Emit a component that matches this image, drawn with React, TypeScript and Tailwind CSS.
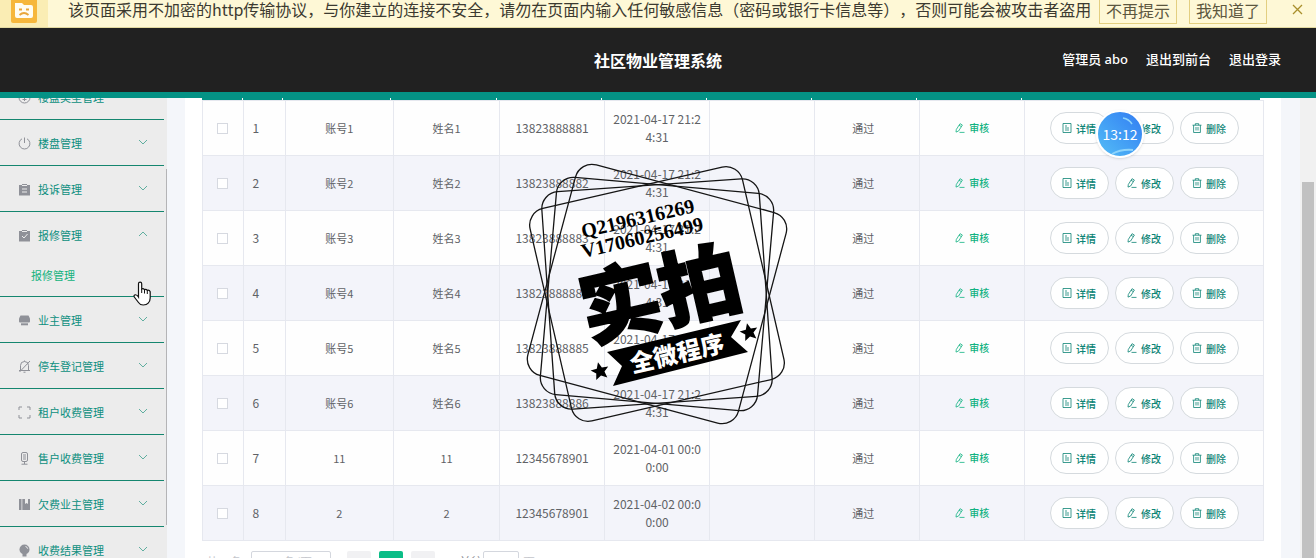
import type { ReactNode } from "react";

const GREY = "#8f9198";

const Chevron = ({ up = false }: { up?: boolean }) => (
  <svg width="10" height="8" viewBox="0 0 10 8" fill="none" stroke="#5fae9f" strokeWidth="1">
    {up ? <path d="M1 6l4-4 4 4" /> : <path d="M1 2l4 4 4-4" />}
  </svg>
);

const Box = ({ children }: { children: ReactNode }) => (
  <svg width="13" height="13" viewBox="0 0 13 13" fill="none" stroke={GREY} strokeWidth="1" className="shrink-0">
    {children}
  </svg>
);

const Coin = () => (
  <Box>
    <circle cx="6.5" cy="6.5" r="5.5" />
    <path d="M4.5 3.5l2 2.5 2-2.5M6.5 6v4M4.5 6.5h4M4.5 8.5h4" />
  </Box>
);
const Power = () => (
  <Box>
    <path d="M4 1.8a5.4 5.4 0 1 0 5 0M6.5 0.5v5.5" />
  </Box>
);
const Order = () => (
  <Box>
    <path d="M1 2h3V1h5v1h3v10.500H1z" fill={GREY} stroke="none" />
    <path d="M4 2.500h5M4 6h5M4 9h5" stroke="#ececec" />
  </Box>
);
const Claim = () => (
  <Box>
    <path d="M1 2h3V1h5v1h3v10.500H1z" fill={GREY} stroke="none" />
    <path d="M4 2.500h5M4 7l2 2 3.500-4" stroke="#ececec" />
  </Box>
);
const Cup = () => (
  <Box>
    <path d="M2.500 1.500h8l1.500 3v3a1 1 0 0 1-1 1H2a1 1 0 0 1-1-1v-3z" fill={GREY} stroke="none" />
    <path d="M3 9.300h7v2H3z" fill={GREY} stroke="none" />
  </Box>
);
const Muted = () => (
  <Box>
    <path d="M1 10.500h11M2.500 10.500V5.500a4 4 0 0 1 8 0v5M5.500 12.200h2M6.500 1.500V.5M12 1L1.500 12" />
  </Box>
);
const Full = () => (
  <Box>
    <path d="M1 4V1h3M9 1h3v3M12 9v3H9M4 12H1V9" />
  </Box>
);
const Mic = () => (
  <Box>
    <rect x="3.500" y=".5" width="6" height="9" rx="1.500" />
    <path d="M5 3h3M5 5h3M5 7h3M6.500 9.500V12M3.500 12.200h6" />
  </Box>
);
const Book = () => (
  <Box>
    <path d="M1 1h2.500v11H1zM4.300 1H7v5l1.500-1L10 6V1h2v11H4.300z" fill={GREY} stroke="none" />
  </Box>
);
const Bulb = () => (
  <Box>
    <circle cx="6.500" cy="5.500" r="5" fill={GREY} stroke="none" />
    <path d="M4.500 10h4v2.500h-4z" fill={GREY} stroke="none" />
    <path d="M7.500 2.500q2 .5 2.200 2.200" stroke="#ececec" />
  </Box>
);

const DocIcon = () => (
  <svg width="10" height="10" viewBox="0 0 10 10" fill="none" stroke="currentColor" strokeWidth=".8">
    <path d="M1 .5h8v9H1zM3 3h2M3 5h4M3 7h4" />
  </svg>
);
const EditIcon = () => (
  <svg width="10" height="10" viewBox="0 0 10 10" fill="none" stroke="currentColor" strokeWidth=".8">
    <path d="M5 .7l2.400 1.300-3.800 6-2.600 1.100.3-2.600zM4 2.300l2.400 1.300M4.500 9.400h5" />
  </svg>
);
const TrashIcon = () => (
  <svg width="10" height="10" viewBox="0 0 10 10" fill="none" stroke="currentColor" strokeWidth=".8">
    <path d="M.5 2.200h9M3.300 2.200V.7h3.400v1.500M1.600 2.200v7.300h6.800V2.200M4 4v3.500M6 4v3.500" />
  </svg>
);

const menu = [
  { label: "楼盘类型管理", icon: <Coin /> },
  { label: "楼盘管理", icon: <Power /> },
  { label: "投诉管理", icon: <Order /> },
  { label: "报修管理", icon: <Claim />, child: "报修管理" },
  { label: "业主管理", icon: <Cup /> },
  { label: "停车登记管理", icon: <Muted /> },
  { label: "租户收费管理", icon: <Full /> },
  { label: "售户收费管理", icon: <Mic /> },
  { label: "欠费业主管理", icon: <Book /> },
  { label: "收费结果管理", icon: <Bulb /> },
];

const rows = [
  ["账号1", "姓名1", "13823888881", "2021-04-17 21:24:31"],
  ["账号2", "姓名2", "13823888882", "2021-04-17 21:24:31"],
  ["账号3", "姓名3", "13823888883", "2021-04-17 21:24:31"],
  ["账号4", "姓名4", "13823888884", "2021-04-17 21:24:31"],
  ["账号5", "姓名5", "13823888885", "2021-04-17 21:24:31"],
  ["账号6", "姓名6", "13823888886", "2021-04-17 21:24:31"],
  ["11", "11", "12345678901", "2021-04-01 00:00:00"],
  ["2", "2", "12345678901", "2021-04-02 00:00:00"],
];

const Pill = ({ icon, children }: { icon: ReactNode; children: ReactNode }) => (
  <button className="flex h-8 w-[59px] items-center justify-center gap-1 rounded-full border border-[#d5dade] bg-white text-[10px] font-medium text-[#0c8475]">
    {icon}
    {children}
  </button>
);

function Banner() {
  return (
    <div className="flex h-7 shrink-0 items-end overflow-hidden border-b border-[#e2d9a0] bg-[#fef8d6] text-base text-[#3c3a30]">
      <div className="flex h-full w-12 shrink-0 justify-center bg-[#faedb4]">
        <svg width="26" height="23" viewBox="0 0 26 23">
          <path d="M0 0h26v21a2 2 0 0 1-2 2H2a2 2 0 0 1-2-2z" fill="#f6b73c" />
          <path d="M4 3h7l2 2h7a2 2 0 0 1 2 2v9a2 2 0 0 1-2 2H6a2 2 0 0 1-2-2z" fill="#fffdf2" />
          <path d="M8 9.500h3M15 9.500h3M8.500 15q4.500-4 9 0" fill="none" stroke="#e9a63a" strokeWidth="1.800" />
        </svg>
      </div>
      <p className="ml-5 h-7 leading-5 whitespace-nowrap [text-spacing-trim:space-all]">
        该页面采用不加密的http传输协议，与你建立的连接不安全，请勿在页面内输入任何敏感信息（密码或银行卡信息等），否则可能会被攻击者盗用
      </p>
      <div className="mb-[3px] ml-auto flex shrink-0 gap-3 text-[#5c573f]">
        <button className="h-8 w-[78px] border border-[#e3cf80] pt-1">不再提示</button>
        <button className="h-8 w-[78px] border border-[#e3cf80] pt-1">我知道了</button>
      </div>
      <button aria-label="关闭" className="mr-[13px] mb-3 ml-[25px] shrink-0">
        <svg width="11" height="11" viewBox="0 0 11 11" stroke="#a98f2c" strokeWidth="1.300">
          <path d="M1 1l9 9M10 1l-9 9" />
        </svg>
      </button>
    </div>
  );
}

function Sidebar() {
  return (
    <aside className="relative w-[167px] shrink-0 overflow-hidden bg-[#ececec]">
      <nav className="-mt-6 w-[164px] text-[11px] text-[#0c8f80]">
        {menu.map((m) => (
          <div key={m.label} className="border-b border-[#15866f]">
            <a href="#" className="flex h-[45px] items-center pt-0.5 pl-[18px]">
              {m.icon}
              <span className="ml-[7px]">{m.label}</span>
              <span className="mr-4 mb-1 ml-auto">
                <Chevron up={!!m.child} />
              </span>
            </a>
            {m.child && (
              <a href="#" className="block h-[39px] pl-[31px] leading-9 text-[#12b27c]">
                {m.child}
              </a>
            )}
          </div>
        ))}
      </nav>
      <div className="absolute top-[71px] right-0 h-[356px] w-px bg-[#b4b4b6]" />
    </aside>
  );
}

function Stamp() {
  const star = "M0-9L2.600-3 9-2.600 4.200 1.600 5.700 8 0 4.600-5.700 8-4.200 1.600-9-2.600-2.600-3z";
  return (
    <svg
      width="270"
      height="270"
      viewBox="-135 -135 270 270"
      className="pointer-events-none absolute top-[61px] left-1/2 ml-[-211px]"
    >
      <g fill="none" stroke="#151515" strokeWidth="1.300">
        {[15, 5, -4, -13].map((a) => (
          <rect key={a} x="-109" y="-109" width="218" height="218" rx="17" transform={`rotate(${a})`} />
        ))}
      </g>
      <g fontFamily="'Liberation Serif', serif" fontWeight="700" fontSize="20">
        <text transform="translate(-74 -56) rotate(-13)">Q2196316269</text>
        <text transform="translate(-74 -36) rotate(-13)">V17060256499</text>
      </g>
      <g fontFamily="'Noto Sans CJK SC', sans-serif" fontWeight="900" textAnchor="middle">
        <text transform="translate(10 29) rotate(-13)" fontSize="81" stroke="#000" strokeWidth="2">
          实拍
        </text>
        <path d="M-50 58L84 26 74 43 91 58-44 92-35 72z" />
        <text transform="translate(22 68) rotate(-13)" fontSize="24" fill="#fff">
          全微程序
        </text>
      </g>
      <path d={star} transform="translate(-57 77) rotate(-13)" />
      <path d={star} transform="translate(92 38) rotate(-13)" />
    </svg>
  );
}

const cell = "border border-[#e6e8ef] p-0 text-center";

export default function App() {
  return (
    <div
      className="relative flex h-screen flex-col overflow-hidden bg-white"
      style={{ fontFamily: "'Noto Sans CJK SC', 'Noto Sans', sans-serif" }}
    >
      <Banner />
      <header className="grid h-[70px] shrink-0 grid-cols-[1fr_auto_1fr] items-center border-b-6 border-[#049285] bg-[#212121] text-[13px] text-white">
        <span />
        <h1 className="text-base font-bold">社区物业管理系统</h1>
        <div className="mr-[35px] flex justify-end gap-[18px] font-['Noto_Sans','Noto_Sans_CJK_SC',sans-serif] font-medium">
          <span>管理员 abo</span>
          <a href="#">退出到前台</a>
          <a href="#">退出登录</a>
        </div>
      </header>

      <div className="flex min-h-0 flex-1">
        <Sidebar />
        <div className="min-w-0 flex-1 overflow-hidden bg-[#f4f6fa] pr-[19px] pl-[18px]">
          <main className="relative h-full bg-white px-[17px] text-[#606266]">
            <div className="mr-1 grid h-0.5 grid-cols-[40fr_40fr_108fr_105fr_105fr_105fr_105fr_105fr_105fr_240fr] gap-px">
              {Array.from({ length: 10 }, (_, i) => (
                <div key={i} className="bg-[#049285]" />
              ))}
            </div>
            <table className="w-full table-fixed border-collapse text-[11px]">
              <colgroup>
                <col className="w-[3.900%]" />
                <col className="w-[3.900%]" />
                <col className="w-[10.200%]" />
                <col className="w-[10%]" />
                <col className="w-[9.900%]" />
                <col className="w-[9.900%]" />
                <col className="w-[9.900%]" />
                <col className="w-[9.900%]" />
                <col className="w-[9.900%]" />
                <col />
              </colgroup>
              <tbody>
                {rows.map((r, i) => (
                  <tr key={i} className="h-[55px] odd:bg-[#fefefe] even:bg-[#f3f4fa]">
                    <td className="border border-[#e6e8ef] p-0 pr-0.5">
                      <input
                        type="checkbox"
                        aria-label={`选择第${i + 1}行`}
                        className="mx-auto block size-[11px] appearance-none border border-[#d6d9e0] bg-white"
                      />
                    </td>
                    <td className="border border-[#e6e8ef] p-0 pl-2 text-left text-xs">{i + 1}</td>
                    <td className={cell}>{r[0]}</td>
                    <td className={cell}>{r[1]}</td>
                    <td className="border border-[#e6e8ef] p-0 text-center text-xs">{r[2]}</td>
                    <td className="border border-[#e6e8ef] p-0 text-center text-xs">
                      <div className="mx-auto w-[91px] leading-[18px] break-all">{r[3]}</div>
                    </td>
                    <td className={cell} />
                    <td className="border border-[#e6e8ef] p-0 pr-2 text-center">通过</td>
                    <td className={cell}>
                      <button className="inline-flex items-center gap-1 text-[10px] font-medium text-[#10b281]">
                        <EditIcon />
                        审核
                      </button>
                    </td>
                    <td className={cell}>
                      <div className="flex justify-center gap-1.5">
                        <Pill icon={<DocIcon />}>详情</Pill>
                        <Pill icon={<EditIcon />}>修改</Pill>
                        <Pill icon={<TrashIcon />}>删除</Pill>
                      </div>
                    </td>
                  </tr>
                ))}
              </tbody>
            </table>
            <div className="mt-2.5 flex h-[22px] items-center text-xs">
              <span className="w-[49px] pl-1 text-[#c4c6cc]">共 8 条</span>
              <select
                aria-label="每页条数"
                className="h-full w-20 appearance-none rounded-xs border border-[#d4d7de] text-center text-[#c4c6cc]"
              >
                <option>10条/页</option>
              </select>
              <button aria-label="上一页" className="ml-4 h-full w-6 rounded-xs bg-[#f1f1f3] text-[#c0c4cc]">
                ‹
              </button>
              <button className="ml-2 h-full w-6 rounded-xs bg-[#0bbd87] text-white">1</button>
              <button aria-label="下一页" className="ml-2 h-full w-6 rounded-xs bg-[#f1f1f3] text-[#c0c4cc]">
                ›
              </button>
              <label className="ml-6 flex h-full items-center text-[#8f9198]">
                前往
                <input
                  defaultValue="1"
                  className="h-full w-9 rounded-xs border border-[#d4d7de] text-center text-[#c4c6cc]"
                />
              </label>
              <span className="ml-1 text-[#c4c6cc]">页</span>
            </div>
            <Stamp />
          </main>
        </div>
        <div className="w-4 shrink-0 bg-[#f1f1f1] px-0.5 pt-[84px]">
          <div className="h-full bg-[#c1c1c1]" />
        </div>
      </div>

      <div className="absolute top-[110px] right-[172px] flex size-12 items-center justify-center rounded-full border-2 border-white bg-linear-to-tr from-[#55bdf6] to-[#347bf2] text-sm text-white shadow">
        <svg width="44" height="44" viewBox="0 0 44 44" className="absolute" fill="none" stroke="#8ed4fb">
          <path d="M25 6q6 1 9 6" strokeWidth="1.500" />
          <path d="M14 42q9-5 21-4" strokeWidth="2" />
        </svg>
        <span className="relative">13:12</span>
      </div>

      <svg width="20" height="26" viewBox="0 0 20 26" className="absolute top-[281px] left-[133px]">
        <path
          d="M5.500 14V2.800a1.600 1.600 0 0 1 3.200 0V8q1.500-1 2.800.6 1.700-.9 2.700.7 2.200-.6 3 1.500V17q0 3-2 5.200-1.500 1.800-5 1.800-3.200 0-4.700-2.500L1.300 16q-.8-1.900.8-2.200Q4 13.500 5.500 16z"
          fill="#fff"
          stroke="#111"
          strokeWidth="1.200"
        />
        <path d="M8.700 8v4M11.500 8.800V12.500M14.300 9.500V13" stroke="#111" strokeWidth="1" />
      </svg>
    </div>
  );
}
